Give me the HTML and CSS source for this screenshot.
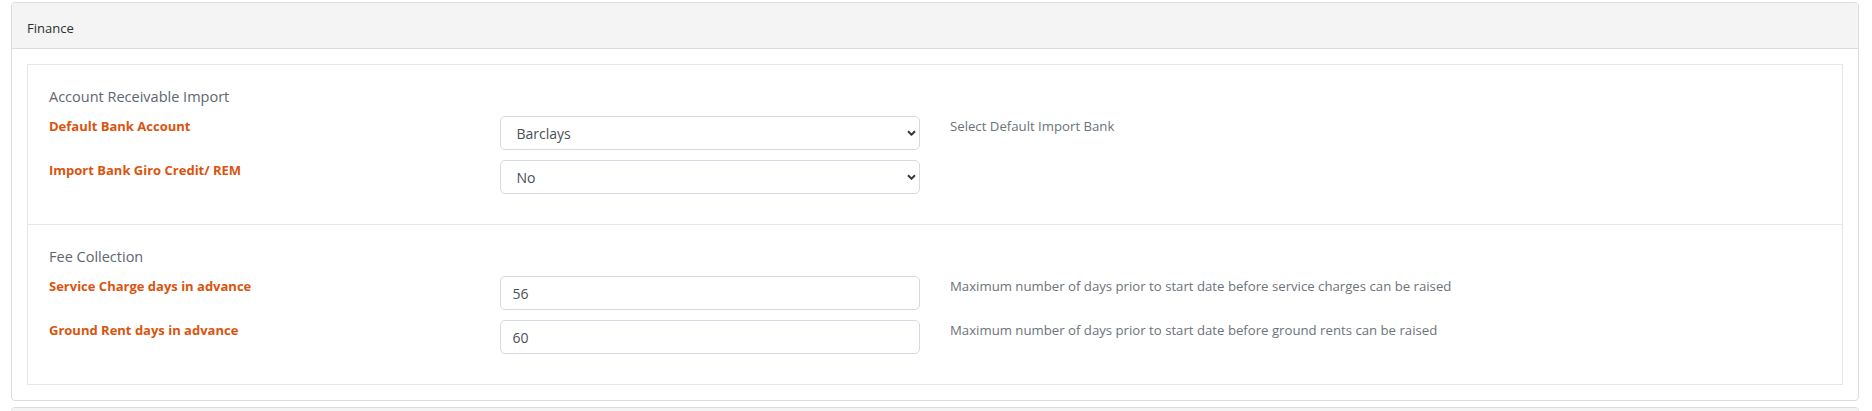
FILE: index.html
```html
<!DOCTYPE html>
<html lang="en">
<head>
    <meta charset="UTF-8">
    <meta name="viewport" content="width=device-width, initial-scale=1.0">
    <title>Finance Settings</title>
    <link rel="stylesheet" href="styles.css">
</head>
<body>
    <div class="card">
        <div class="card-header">Finance</div>
        <div class="card-body">
            <div class="settings-box">
                <!-- AR import -->
                <div class="settings-section">
                    <h4 class="section-title">Account Receivable Import</h4>

                    <div class="setting-row">
                        <label class="setting-label" for="defaultBank">Default Bank Account</label>
                        <div class="setting-field">
                            <div class="select-wrap">
                                <select id="defaultBank" class="form-control">
                                    <option selected>Barclays</option>
                                    <option>HSBC</option>
                                    <option>Lloyds</option>
                                    <option>NatWest</option>
                                </select>
                                <svg class="chevron" width="9" height="6" viewBox="0 0 9 6"><path d="M1 1.2 L4.5 4.7 L8 1.2" fill="none" stroke="#343a40" stroke-width="2"/></svg>
                            </div>
                        </div>
                        <div class="setting-help">Select Default Import Bank</div>
                    </div>

                    <div class="setting-row">
                        <label class="setting-label" for="giroCredit">Import Bank Giro Credit/ REM</label>
                        <div class="setting-field">
                            <div class="select-wrap">
                                <select id="giroCredit" class="form-control">
                                    <option selected>No</option>
                                    <option>Yes</option>
                                </select>
                                <svg class="chevron" width="9" height="6" viewBox="0 0 9 6"><path d="M1 1.2 L4.5 4.7 L8 1.2" fill="none" stroke="#343a40" stroke-width="2"/></svg>
                            </div>
                        </div>
                        <div class="setting-help"></div>
                    </div>
                </div>

                <!-- fee collection -->
                <div class="settings-section">
                    <h4 class="section-title">Fee Collection</h4>

                    <div class="setting-row">
                        <label class="setting-label" for="serviceDays">Service Charge days in advance</label>
                        <div class="setting-field">
                            <input type="text" id="serviceDays" class="form-control" value="56">
                        </div>
                        <div class="setting-help">Maximum number of days prior to start date before service charges can be raised</div>
                    </div>

                    <div class="setting-row">
                        <label class="setting-label" for="groundDays">Ground Rent days in advance</label>
                        <div class="setting-field">
                            <input type="text" id="groundDays" class="form-control" value="60">
                        </div>
                        <div class="setting-help">Maximum number of days prior to start date before ground rents can be raised</div>
                    </div>
                </div>
            </div>
        </div>
    </div>

    <div class="card">
        <div class="card-header"></div>
    </div>
</body>
</html>
```

FILE: styles.css
```css
body {
    font-family: "Open Sans", "Liberation Sans", sans-serif;
    background: #fff;
    color: #333;
    margin: 2px 13px 0 11px;
}

.card {
    border: 1px solid #dcdcdc;
    border-radius: 4px;
    background: white;
    margin-bottom: 6px;
    overflow: hidden;
}

.card-header {
    background: #f4f4f4;
    border-bottom: 1px solid #dcdcdc;
    padding: 15px 15px 10px;
    font-size: 13px;
    line-height: 20px;
    min-height: 20px;
    color: #2b2f33;
}

.card-body {
    padding: 15px;
}

.settings-box {
    border: 1px solid #e3e6ea;
}

.settings-section {
    padding: 22px 6px 20px;
}

.settings-section + .settings-section {
    border-top: 1px solid #e3e6ea;
}

.section-title {
    margin: 0 0 9px;
    padding: 0 15px;
    font-size: 14.5px;
    line-height: 20px;
    font-weight: normal;
    color: #5d6670;
}

.setting-row {
    display: grid;
    grid-template-columns: 25% 25% 50%;
    margin-bottom: 10px;
}

.setting-label,
.setting-field,
.setting-help {
    padding: 0 15px;
}

.setting-label {
    font-size: 13px;
    line-height: 20px;
    font-weight: bold;
    color: #d9540e;
}

.setting-help {
    font-size: 13.2px;
    line-height: 20px;
    color: #6c737a;
}

.form-control {
    display: block;
    width: 100%;
    height: 34px;
    box-sizing: border-box;
    border: 1px solid #d3dae3;
    border-radius: 5px;
    padding: 0 12px;
    font-family: inherit;
    font-size: 14px;
    color: #495057;
    background: white;
    outline: none;
}

.select-wrap {
    position: relative;
}

.select-wrap select {
    appearance: none;
    -webkit-appearance: none;
    padding-left: 16px;
    padding-right: 24px;
}

.chevron {
    position: absolute;
    right: 4px;
    top: 14px;
    pointer-events: none;
}
```
